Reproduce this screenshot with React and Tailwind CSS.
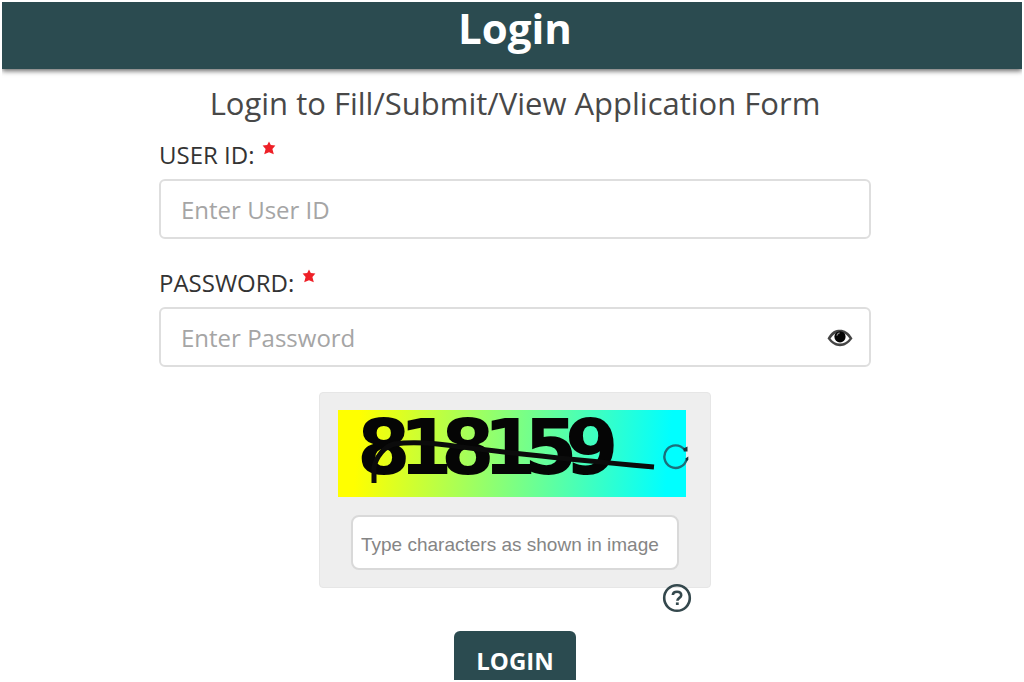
import React from 'react';

const RequiredMark = () => (
    <svg viewBox="0 0 14 14" className="mt-1 h-[14px] w-[14px] shrink-0" aria-hidden="true">
        <path
            d="M7 0.5L8.8 4.1L13.4 4.5L10.4 7.9L11.8 13.2L7 11.2L2.200 13.2L3.600 7.900L0.600 4.500L5.200 4.100Z"
            fill="#ee2027"
        />
    </svg>
);

const EyeIcon = () => (
    <svg viewBox="0 0 26 18" className="h-[18px] w-[26px]" aria-hidden="true">
        <path d="M0.500 9.500C4.500 2.200 8.500 0.800 13 0.800C17.500 0.800 21.500 3 25.500 9.500C21.500 14.700 17.500 17.200 13 17.200C8.500 17.200 4.500 14.700 0.500 9.500Z" fill="#444" />
        <path d="M3.500 9.500C6 5.500 9 3.400 13 3.400C17 3.400 20 5.500 22.500 9.500C20 13 17 14.600 13 14.600C9 14.600 6 13 3.500 9.500Z" fill="#fff" />
        <circle cx="13" cy="7.800" r="5.600" fill="#050505" />
        <path d="M9.800 6.600C10.200 5 11.200 4 12.600 3.800" fill="none" stroke="#888" strokeWidth="1.200" />
    </svg>
);

const CaptchaImage = () => (
    <svg viewBox="0 0 348 87" className="block h-[87px] w-[348px] overflow-visible" role="img" aria-label="Captcha">
        <defs>
            <linearGradient id="captcha-bg" gradientUnits="userSpaceOnUse" x1="20" y1="30" x2="330" y2="56">
                <stop offset="0" stopColor="#ffff00" />
                <stop offset="1" stopColor="#00ffff" />
            </linearGradient>
        </defs>
        <rect width="348" height="87" fill="url(#captcha-bg)" />
        <text x="19 61 103 145 186 227" y="64" fill="#050505" className="font-['DejaVu_Sans'] text-[77px] font-bold">
            818159
        </text>
        <path d="M36 73V62C35 54 42 38 56 34C84 30 112 36 140 39C190 45 260 52 316 57" fill="none" stroke="#0b0b0b" strokeWidth="5" />
    </svg>
);

const RefreshIcon = () => (
    <svg viewBox="0 0 26 26" className="h-[26px] w-[26px]" aria-hidden="true">
        <path d="M21.500 5.600A11.300 11.300 0 1 0 23.600 15.500" fill="none" stroke="#1b6f7b" strokeWidth="2.400" />
        <path d="M20.200 4.500L24.500 2.600V7.600L20.800 7.400Z" fill="#17343a" />
        <path d="M22.300 14.500L25.300 12.500V15.500L23.800 17.500Z" fill="#17343a" />
    </svg>
);

const HelpIcon = () => (
    <svg viewBox="0 0 30 30" className="h-[30px] w-[30px]" fill="none" stroke="#34484d" aria-hidden="true">
        <circle cx="15" cy="15" r="12.800" strokeWidth="2.600" />
        <path d="M10.800 12C11 9.800 12.800 8.800 15 8.800C17.600 8.800 19.200 10.200 19.200 12.200C19.200 14.800 15.400 15 15.400 17.800" strokeWidth="2.600" />
        <path d="M15.300 19.400V22" strokeWidth="2.800" />
    </svg>
);

const Field = ({ id, label, type, placeholder, children }) => (
    <div>
        <label htmlFor={id} className="flex h-9 gap-2 text-2xl leading-9 font-medium text-[#333]">
            {label}
            <RequiredMark />
        </label>
        <div className="relative mt-[6px]">
            <input
                id={id}
                type={type}
                placeholder={placeholder}
                className="h-[60px] w-full rounded-md border-2 border-[#dedede] bg-white px-5 text-2xl text-[#333] placeholder:text-[#a5a5a5]"
            />
            {children}
        </div>
    </div>
);

const App = () => {
    return (
        <div className="h-screen overflow-hidden border-2 border-white bg-white font-['Open_Sans',sans-serif]">
            <header className="flex h-[67px] justify-center bg-[#2b4b50] pl-[6px] shadow-[0_2px_5px_rgba(0,0,0,0.6)]">
                <h1 className="text-[42px] leading-[52px] font-bold text-white">Login</h1>
            </header>

            <form className="mx-auto w-full max-w-[718px] pt-4 pl-[6px]" onSubmit={(e) => e.preventDefault()}>
                <h2 className="text-center text-[31px] leading-9 whitespace-nowrap text-[#484848]">
                    Login to Fill/Submit/View Application Form
                </h2>

                <div className="mt-4 flex flex-col gap-[26px]">
                    <Field id="user-id" label="USER ID:" type="text" placeholder="Enter User ID" />
                    <Field id="password" label="PASSWORD:" type="password" placeholder="Enter Password">
                        <button type="button" aria-label="Show password" className="absolute top-[22px] right-[18px]">
                            <EyeIcon />
                        </button>
                    </Field>
                </div>

                <div className="relative mx-auto mt-[25px] h-[196px] w-[392px] rounded-sm border border-[#e6e6e6] bg-[#eeeeee] px-[18px] pt-[17px]">
                    <CaptchaImage />
                    <button type="button" aria-label="New image" className="absolute top-[51px] right-[21px]">
                        <RefreshIcon />
                    </button>
                    <input
                        type="text"
                        aria-label="Captcha"
                        placeholder="Type characters as shown in image"
                        className="mx-auto mt-[18px] block h-[55px] w-[328px] rounded-lg border-2 border-[#d9d9d9] bg-white px-2 pt-1 font-['Liberation_Sans',sans-serif] text-[19px] text-[#333] placeholder:text-[#858585]"
                    />
                    <button type="button" aria-label="Help" className="absolute right-[18px] -bottom-[26px]">
                        <HelpIcon />
                    </button>
                </div>

                <button
                    type="submit"
                    className="mx-auto mt-[43px] block h-[60px] w-[122px] rounded-md bg-[#2b4b50] text-2xl font-bold text-white"
                >
                    LOGIN
                </button>
            </form>
        </div>
    );
};

export default App;
